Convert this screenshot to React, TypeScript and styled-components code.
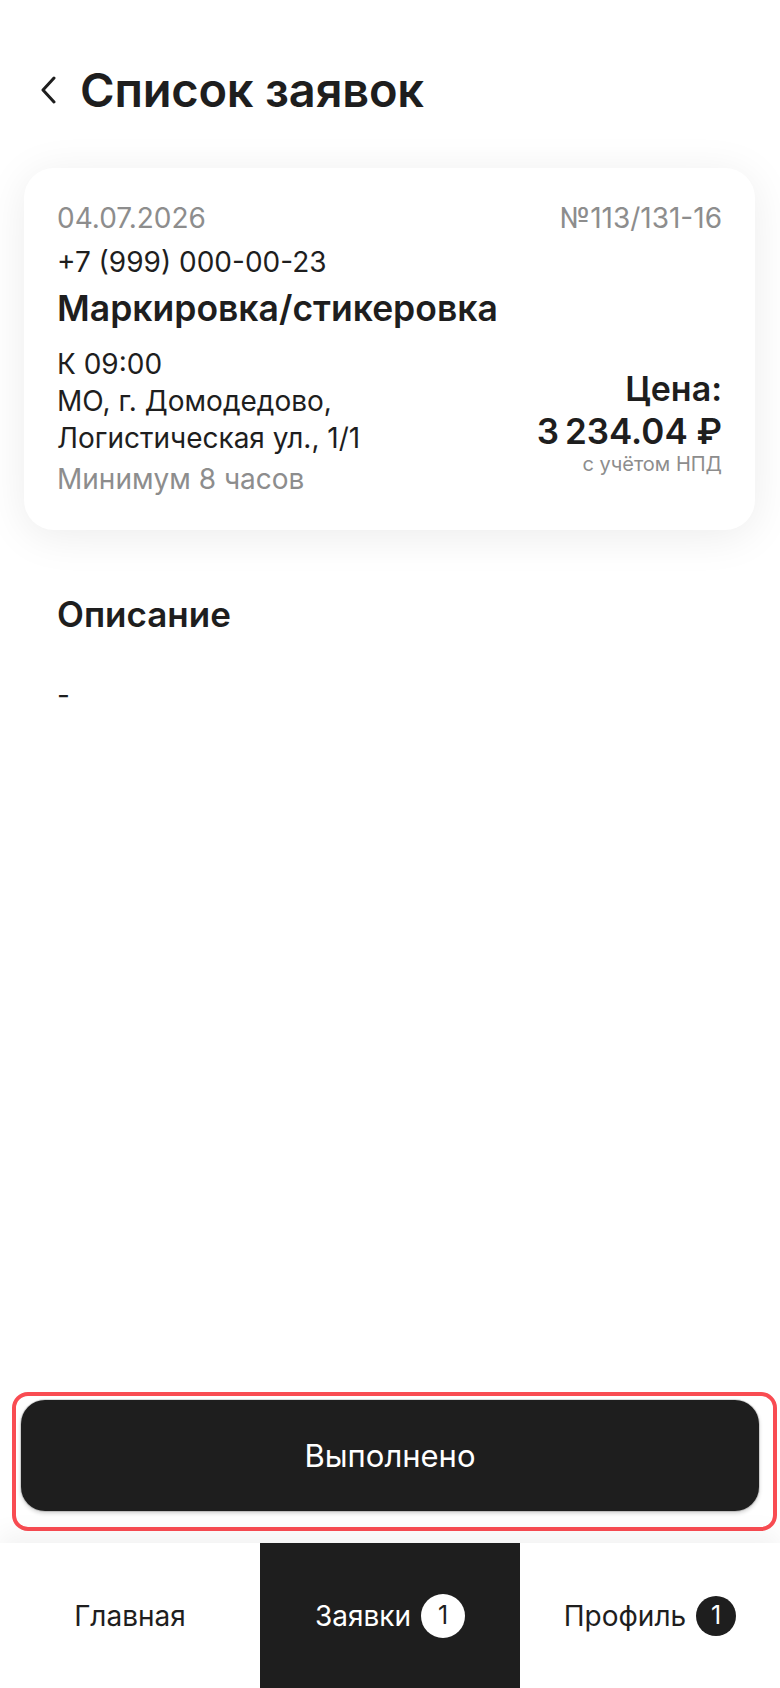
import styled, { createGlobalStyle } from 'styled-components'

const GlobalStyle = createGlobalStyle`
  html, body {
    margin: 0;
    padding: 0;
    background: #ffffff;
  }

  body {
    font-family: Inter, 'Noto Sans', sans-serif;
    color: #1e1e1e;
    -webkit-font-smoothing: antialiased;
  }

  * {
    box-sizing: border-box;
  }
`

const Page = styled.div`
  display: flex;
  flex-direction: column;
  min-height: 100vh;
  background: #ffffff;
`

const Header = styled.header`
  display: flex;
  align-items: center;
  gap: 24px;
  padding: 62px 24px 0 40px;
`

const BackButton = styled.button`
  display: flex;
  align-items: center;
  justify-content: center;
  width: 16px;
  height: 56px;
  padding: 0;
  border: none;
  background: none;
  color: #1e1e1e;
  cursor: pointer;
`

const Title = styled.h1`
  margin: 0;
  font-size: 47px;
  line-height: 56px;
  font-weight: 600;
  letter-spacing: -0.2px;
`

const Main = styled.main`
  flex: 1;
  display: flex;
  flex-direction: column;
`

const Card = styled.section`
  margin: 50px 25px 0 24px;
  padding: 33px 33px 32px;
  border-radius: 30px;
  background: #ffffff;
  box-shadow: 0 6px 44px rgba(0, 0, 0, 0.08);
`

const CardTop = styled.div`
  display: flex;
  justify-content: space-between;
  align-items: center;
`

const Muted = styled.span`
  font-size: 28px;
  line-height: 34px;
  color: #8d8d8d;
`

const Phone = styled.div`
  margin-top: 10px;
  font-size: 28px;
  line-height: 34px;
`

const Service = styled.div`
  margin-top: 9px;
  font-size: 35.5px;
  line-height: 42px;
  font-weight: 600;
`

const Details = styled.div`
  margin-top: 16px;
  display: flex;
  justify-content: space-between;
  align-items: center;
`

const DetailLines = styled.div`
  display: flex;
  flex-direction: column;
`

const DetailLine = styled.span<{ $muted?: boolean }>`
  font-size: 28px;
  line-height: 37px;
  color: ${props => (props.$muted ? '#8d8d8d' : '#1e1e1e')};
  margin-top: ${props => (props.$muted ? '4px' : '0')};
`

const PriceBlock = styled.div`
  display: flex;
  flex-direction: column;
  align-items: flex-end;
  text-align: right;
`

const PriceLabel = styled.span`
  font-size: 34px;
  line-height: 42px;
  font-weight: 600;
`

const PriceValue = styled.span`
  font-size: 35px;
  line-height: 42px;
  font-weight: 600;
`

const PriceNote = styled.span`
  font-size: 20px;
  line-height: 24px;
  color: #8d8d8d;
`

const Description = styled.div`
  margin: 62px 33px 0 57px;
`

const SectionTitle = styled.h2`
  margin: 0;
  font-size: 35px;
  line-height: 44px;
  font-weight: 600;
`

const SectionText = styled.p`
  margin: 42px 0 0;
  font-size: 28px;
  line-height: 34px;
`

const ActionFrame = styled.div`
  margin: 0 3px 12px 12px;
  padding: 4px 14px 16px 5px;
  border: 4px solid #f94c52;
  border-radius: 16px;
`

const DoneButton = styled.button`
  display: block;
  width: 100%;
  height: 111px;
  border: none;
  border-radius: 24px;
  background: #1e1e1e;
  color: #ffffff;
  font-family: Inter, 'Noto Sans', sans-serif;
  font-size: 31px;
  font-weight: 400;
  box-shadow: 0 0 0 1px rgba(0, 0, 0, 0.12), 0 2px 4px rgba(0, 0, 0, 0.2);
  cursor: pointer;
`

const TabBar = styled.nav`
  display: grid;
  grid-template-columns: repeat(3, 1fr);
  height: 145px;
  background: #ffffff;
  box-shadow: 0 -10px 24px rgba(0, 0, 0, 0.05);
`

const Tab = styled.div<{ $active?: boolean }>`
  display: flex;
  align-items: center;
  justify-content: center;
  gap: 10px;
  background: ${props => (props.$active ? '#1e1e1e' : '#ffffff')};
  color: ${props => (props.$active ? '#ffffff' : '#1e1e1e')};
  font-size: 28px;
  line-height: 34px;
`

const Badge = styled.span<{ $inverted?: boolean }>`
  display: flex;
  align-items: center;
  justify-content: center;
  width: ${props => (props.$inverted ? '44px' : '40px')};
  height: ${props => (props.$inverted ? '44px' : '40px')};
  border-radius: 50%;
  background: ${props => (props.$inverted ? '#ffffff' : '#1e1e1e')};
  color: ${props => (props.$inverted ? '#1e1e1e' : '#ffffff')};
  font-size: 25px;
  line-height: 1;
`

const ChevronLeft = () => (
  <svg width="16" height="28" viewBox="0 0 16 28" fill="none">
    <path d="M14 2L3 14l11 12" stroke="currentColor" strokeWidth="3" strokeLinecap="round" strokeLinejoin="round" />
  </svg>
)

const App = (): JSX.Element => {
  return (
    <>
      <GlobalStyle />
      <Page>
        <Header>
          <BackButton aria-label="Назад">
            <ChevronLeft />
          </BackButton>
          <Title>Список заявок</Title>
        </Header>

        <Main>
          <Card>
            <CardTop>
              <Muted>04.07.2026</Muted>
              <Muted>№113/131-16</Muted>
            </CardTop>
            <Phone>+7 (999) 000-00-23</Phone>
            <Service>Маркировка/стикеровка</Service>
            <Details>
              <DetailLines>
                <DetailLine>К 09:00</DetailLine>
                <DetailLine>МО, г. Домодедово,</DetailLine>
                <DetailLine>Логистическая ул., 1/1</DetailLine>
                <DetailLine $muted>Минимум 8 часов</DetailLine>
              </DetailLines>
              <PriceBlock>
                <PriceLabel>Цена:</PriceLabel>
                <PriceValue>3{'\u202F'}234.04 ₽</PriceValue>
                <PriceNote>с учётом НПД</PriceNote>
              </PriceBlock>
            </Details>
          </Card>

          <Description>
            <SectionTitle>Описание</SectionTitle>
            <SectionText>-</SectionText>
          </Description>
        </Main>

        <ActionFrame>
          <DoneButton>Выполнено</DoneButton>
        </ActionFrame>

        <TabBar>
          <Tab>Главная</Tab>
          <Tab $active>
            Заявки
            <Badge $inverted>1</Badge>
          </Tab>
          <Tab>
            Профиль
            <Badge>1</Badge>
          </Tab>
        </TabBar>
      </Page>
    </>
  )
}

export default App
